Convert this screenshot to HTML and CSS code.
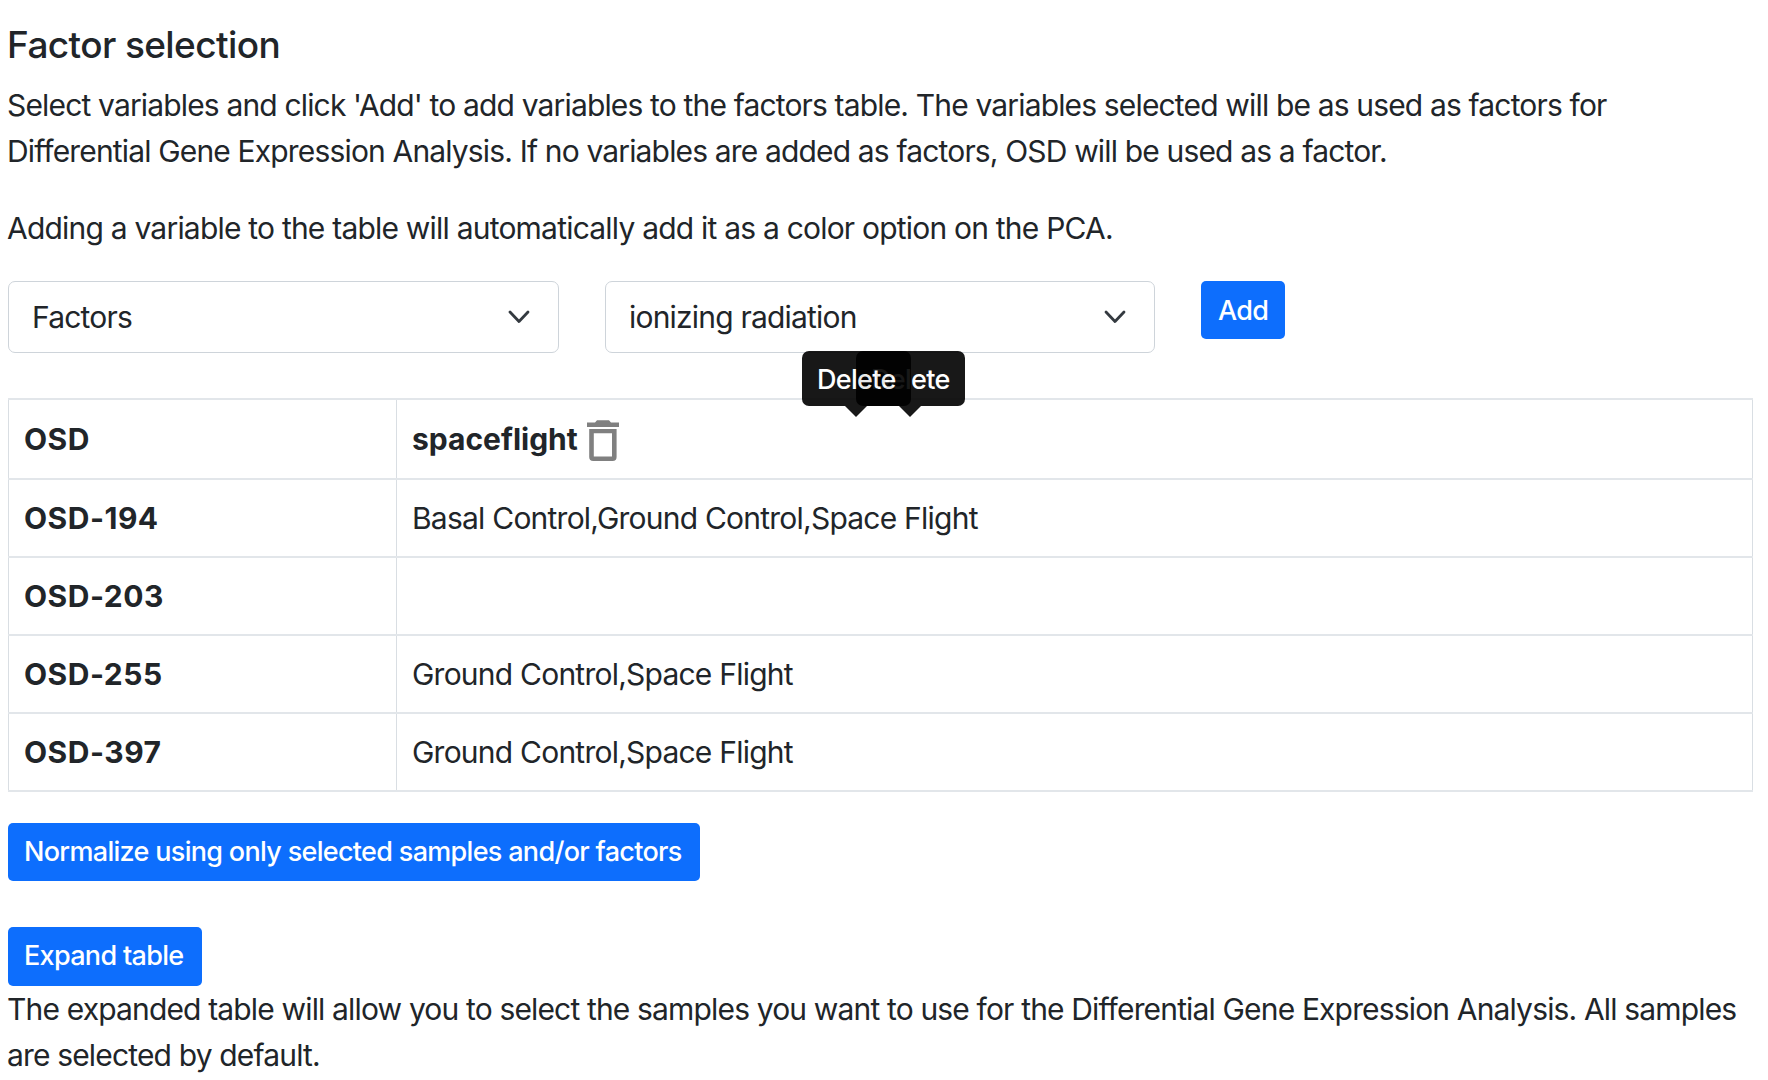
FILE: index.html
```html
<!DOCTYPE html>
<html lang="en">
<head>
<meta charset="utf-8">
<title>Factor selection</title>
<link rel="stylesheet" href="styles.css">
</head>
<body>
<main class="panel">
  <h5 class="title">Factor selection</h5>
  <p class="text">Select variables and click 'Add' to add variables to the factors table. The variables selected will be as used as factors for<br>Differential Gene Expression Analysis. If no variables are added as factors, OSD will be used as a factor.</p>
  <p class="text note">Adding a variable to the table will automatically add it as a color option on the PCA.</p>
  <div class="controls">
    <div class="select" role="combobox" aria-expanded="false">
      <span>Factors</span>
      <svg class="chevron" viewBox="0 0 22 14"><path d="M2 2l9 9.5L20 2"/></svg>
    </div>
    <div class="select" role="combobox" aria-expanded="false">
      <span>ionizing radiation</span>
      <svg class="chevron" viewBox="0 0 22 14"><path d="M2 2l9 9.5L20 2"/></svg>
    </div>
    <button class="btn btn-add">Add</button>
    <div class="tooltip tooltip-back" role="tooltip">Delete</div>
    <div class="tooltip tooltip-front" role="tooltip">Delete</div>
  </div>
  <table class="factors">
    <tr>
      <th>OSD</th>
      <th>
        <div class="factor">
          <span>spaceflight</span>
          <svg class="trash" viewBox="0 0 32 41"><path fill-rule="evenodd" d="M0 2.6H8L10 .3H22L24 2.6H32V7H0ZM2.2 9H29.6V37Q29.6 41 25.6 41H6.2Q2.2 41 2.2 37ZM6.8 13.3V36.5H25V13.3Z"/></svg>
        </div>
      </th>
    </tr>
    <tr><th>OSD-194</th><td>Basal Control,Ground Control,Space Flight</td></tr>
    <tr><th>OSD-203</th><td></td></tr>
    <tr><th>OSD-255</th><td>Ground Control,Space Flight</td></tr>
    <tr><th>OSD-397</th><td>Ground Control,Space Flight</td></tr>
  </table>
  <button class="btn btn-normalize">Normalize using only selected samples and/or factors</button>
  <button class="btn btn-expand">Expand table</button>
  <p class="text">The expanded table will allow you to select the samples you want to use for the Differential Gene Expression Analysis. All samples<br>are selected by default.</p>
</main>
</body>
</html>
```
FILE: styles.css
```css
* {
  box-sizing: border-box;
}

body {
  margin: 0;
  background: #fff;
  color: #212529;
  font: 400 30px/46px Inter, "Liberation Sans", sans-serif;
  letter-spacing: -0.84px;
}

.panel {
  display: flex;
  flex-direction: column;
  align-items: flex-start;
  padding: 23px 15px 0 8px;
}

.title {
  margin: 0 0 15px -1px;
  font-size: 37px;
  font-weight: 500;
  line-height: 44px;
  letter-spacing: -0.6px;
}

.text {
  margin: 0 0 0 -1px;
  white-space: nowrap;
}

.note {
  margin: 31px 0 30px -1px;
  letter-spacing: -0.79px;
}

.controls {
  position: relative;
  display: flex;
  align-items: flex-start;
  gap: 46px;
  margin-bottom: 45px;
}

.select {
  display: flex;
  align-items: center;
  justify-content: space-between;
  width: 551px;
  height: 72px;
  padding: 0 28px 0 23px;
  border: 1px solid #ced4da;
  border-radius: 7px;
  letter-spacing: -0.8px;
}

.select + .select {
  width: 550px;
}

.chevron {
  width: 22px;
  height: 14px;
  fill: none;
  stroke: #343a40;
  stroke-width: 2.8;
  stroke-linecap: round;
  stroke-linejoin: round;
}

.btn {
  height: 58px;
  padding: 0 0 1px 16px;
  border: 0;
  border-radius: 5px;
  background: #0d6efd;
  color: #fff;
  font: inherit;
  font-size: 27px;
  font-weight: 500;
  letter-spacing: -0.69px;
  text-align: left;
  white-space: nowrap;
}

.btn-add {
  width: 84px;
  padding: 1px 0 0 17px;
}

.btn-normalize {
  width: 692px;
  margin-bottom: 46px;
}

.btn-expand {
  width: 194px;
  height: 59px;
  padding-bottom: 2px;
}

.tooltip {
  position: absolute;
  top: 70px;
  width: 109px;
  height: 55px;
  padding-left: 15px;
  border-radius: 7px;
  background: #000;
  color: #fff;
  font-size: 27px;
  font-weight: 500;
  line-height: 57px;
  letter-spacing: -0.7px;
  opacity: 0.9;
}

.tooltip::after {
  content: "";
  position: absolute;
  top: 100%;
  left: 43px;
  border: solid transparent;
  border-width: 11px 11px 0;
  border-top-color: #000;
}

.tooltip-back {
  left: 848px;
}

.tooltip-front {
  left: 794px;
}

.factors {
  width: 1745px;
  margin-bottom: 31px;
  border-collapse: collapse;
  table-layout: fixed;
}

.factors th,
.factors td {
  height: 78px;
  padding: 0 15px 1px;
  border: 1px solid #dee2e6;
  border-width: 2px 1px;
  border-color: #e2e6ea #d9dee3;
  text-align: left;
  letter-spacing: -0.77px;
}

.factors th {
  font-weight: 700;
  letter-spacing: 0.5px;
}

.factors th:first-child {
  width: 388px;
}

.factors tr:first-child th {
  height: 80px;
}

.factor {
  display: flex;
  align-items: center;
  gap: 9px;
  letter-spacing: 0;
}

.trash {
  width: 32px;
  height: 41px;
  margin-top: 3px;
  fill: #808080;
}
```
